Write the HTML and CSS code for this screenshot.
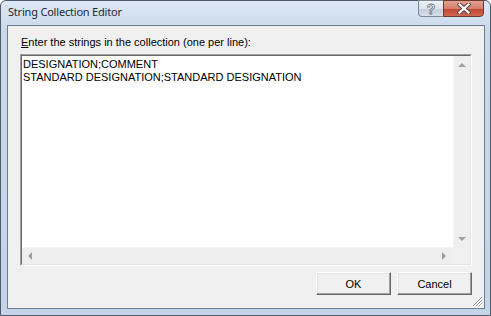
FILE: index.html
```html
<!DOCTYPE html>
<html lang="en">
<head>
    <meta charset="UTF-8">
    <title>String Collection Editor</title>
    <link rel="stylesheet" href="styles.css">
</head>
<body>
    <div class="window">
        <!-- Title bar -->
        <div class="titlebar">
            <span class="title">String Collection Editor</span>
            <div class="caption-buttons">
                <div class="cap-btn help"><span>?</span></div>
                <div class="cap-btn close">
                    <svg width="14" height="11" viewBox="0 0 14 11">
                        <path d="M2.5 1.5 L11.5 9.5 M11.5 1.5 L2.5 9.5" stroke="#4b3f3f" stroke-width="4" stroke-linecap="square"/>
                        <path d="M2.5 1.5 L11.5 9.5 M11.5 1.5 L2.5 9.5" stroke="#ffffff" stroke-width="2.2" stroke-linecap="square"/>
                    </svg>
                </div>
            </div>
        </div>

        <!-- Client area -->
        <div class="client">
            <label class="prompt"><u>E</u>nter the strings in the collection (one per line):</label>

            <div class="field">
                <div class="field-inner">
                    <div class="lines">
                        <div>DESIGNATION;COMMENT</div>
                        <div>STANDARD DESIGNATION;STANDARD DESIGNATION</div>
                    </div>
                    <div class="vscroll">
                        <span class="arrow up"></span>
                        <span class="arrow down"></span>
                    </div>
                    <div class="hscroll">
                        <span class="arrow left"></span>
                        <span class="arrow right"></span>
                    </div>
                    <div class="corner"></div>
                </div>
            </div>

            <div class="actions">
                <button class="btn">OK</button>
                <button class="btn">Cancel</button>
            </div>

            <svg class="grip" width="12" height="12" viewBox="0 0 12 12">
                <path d="M11 2 L2 11 M11 5 L5 11 M11 8 L8 11" stroke="#a3a3a3" stroke-width="1"/>
                <path d="M12 3 L3 12 M12 6 L6 12 M12 9 L9 12" stroke="#ffffff" stroke-width="1"/>
            </svg>
        </div>
    </div>
</body>
</html>
```

FILE: styles.css
```css
/* Windows 7 style dialog */
* {
    box-sizing: border-box;
}

body {
    margin: 0;
    background-color: #ffffff;
    font-family: "Liberation Sans", Arial, sans-serif;
    font-size: 11px;
    color: #000;
}

.window {
    width: 491px;
    height: 316px;
    border: 1px solid #4f5966;
    border-radius: 6px 6px 0 0;
    background: linear-gradient(#dde8f5, #c9d9ec 30px, #c4d5e9);
    display: flex;
    flex-direction: column;
}

.titlebar {
    height: 24px;
    display: flex;
    align-items: flex-start;
    padding-left: 7px;
    padding-right: 6px;
}

.title {
    font-family: "Noto Sans", "Open Sans", sans-serif;
    font-size: 11px;
    letter-spacing: -0.2px;
    line-height: 16px;
    padding-top: 3px;
    color: #1e2833;
}

.caption-buttons {
    margin-left: auto;
    margin-top: -1px;
    display: flex;
}

.cap-btn {
    height: 17px;
    display: flex;
    align-items: center;
    justify-content: center;
}

.help {
    width: 25px;
    border: 1px solid #7a8796;
    border-right: none;
    border-radius: 0 0 0 4px;
    background: linear-gradient(#eef2f7, #dae2ec 50%, #c3cedb 51%, #d5dee9);
}

.help span {
    font-family: "Liberation Sans", sans-serif;
    font-weight: bold;
    font-size: 14px;
    color: #f4f6f8;
    -webkit-text-stroke: 0.8px #6a7480;
    line-height: 14px;
}

.close {
    width: 41px;
    border: 1px solid #6b3a33;
    border-radius: 0 0 4px 0;
    background: linear-gradient(#e5a090, #d47e6b 50%, #c2452f 51%, #cf6750);
}

.client {
    position: relative;
    flex: 1;
    margin: 0 5px 6px 6px;
    border: 1px solid #6f7e8e;
    background-color: #f0f0f0;
    display: flex;
    flex-direction: column;
    padding: 10px 12px 12px 12px;
}

.prompt {
    line-height: 13px;
    padding-left: 1px;
    margin-bottom: 5px;
}

.field {
    height: 212px;
    border: 1px solid;
    border-color: #a0a0a0 #ffffff #ffffff #a0a0a0;
}

.field-inner {
    height: 100%;
    border: 1px solid;
    border-color: #696969 #e3e3e3 #e3e3e3 #696969;
    background-color: #ffffff;
    display: grid;
    grid-template-columns: 1fr 17px;
    grid-template-rows: 1fr 17px;
}

.lines {
    padding: 2px 0 0 1px;
    line-height: 13px;
    white-space: nowrap;
}

.vscroll, .hscroll, .corner {
    background-color: #efefef;
    position: relative;
}

.vscroll {
    border-left: 1px solid #f7f7f7;
    display: flex;
    flex-direction: column;
    justify-content: space-between;
    align-items: center;
    padding: 7px 0 6px;
}

.hscroll {
    border-top: 1px solid #f7f7f7;
    display: flex;
    justify-content: space-between;
    align-items: center;
    padding: 0 7px 0 6px;
}

.corner {
    background-color: #f0f0f0;
}

.arrow {
    width: 0;
    height: 0;
    border: 4px solid transparent;
}

.arrow.up {
    border-top: none;
    border-bottom-color: #a2a2a2;
}

.arrow.down {
    border-bottom: none;
    border-top-color: #a2a2a2;
}

.arrow.left {
    border-left: none;
    border-right-color: #a2a2a2;
}

.arrow.right {
    border-right: none;
    border-left-color: #a2a2a2;
}

.actions {
    display: flex;
    justify-content: flex-end;
    gap: 6px;
    margin-top: 6px;
}

.btn {
    width: 75px;
    height: 23px;
    font-family: "Liberation Sans", Arial, sans-serif;
    font-size: 11px;
    color: #000;
    background-color: #f0f0f0;
    border: 1px solid;
    border-color: #ffffff #696969 #696969 #ffffff;
    box-shadow: inset -1px -1px #a0a0a0, inset 1px 1px #e3e3e3;
    padding: 0;
}

.grip {
    position: absolute;
    right: 1px;
    bottom: 1px;
}
```
